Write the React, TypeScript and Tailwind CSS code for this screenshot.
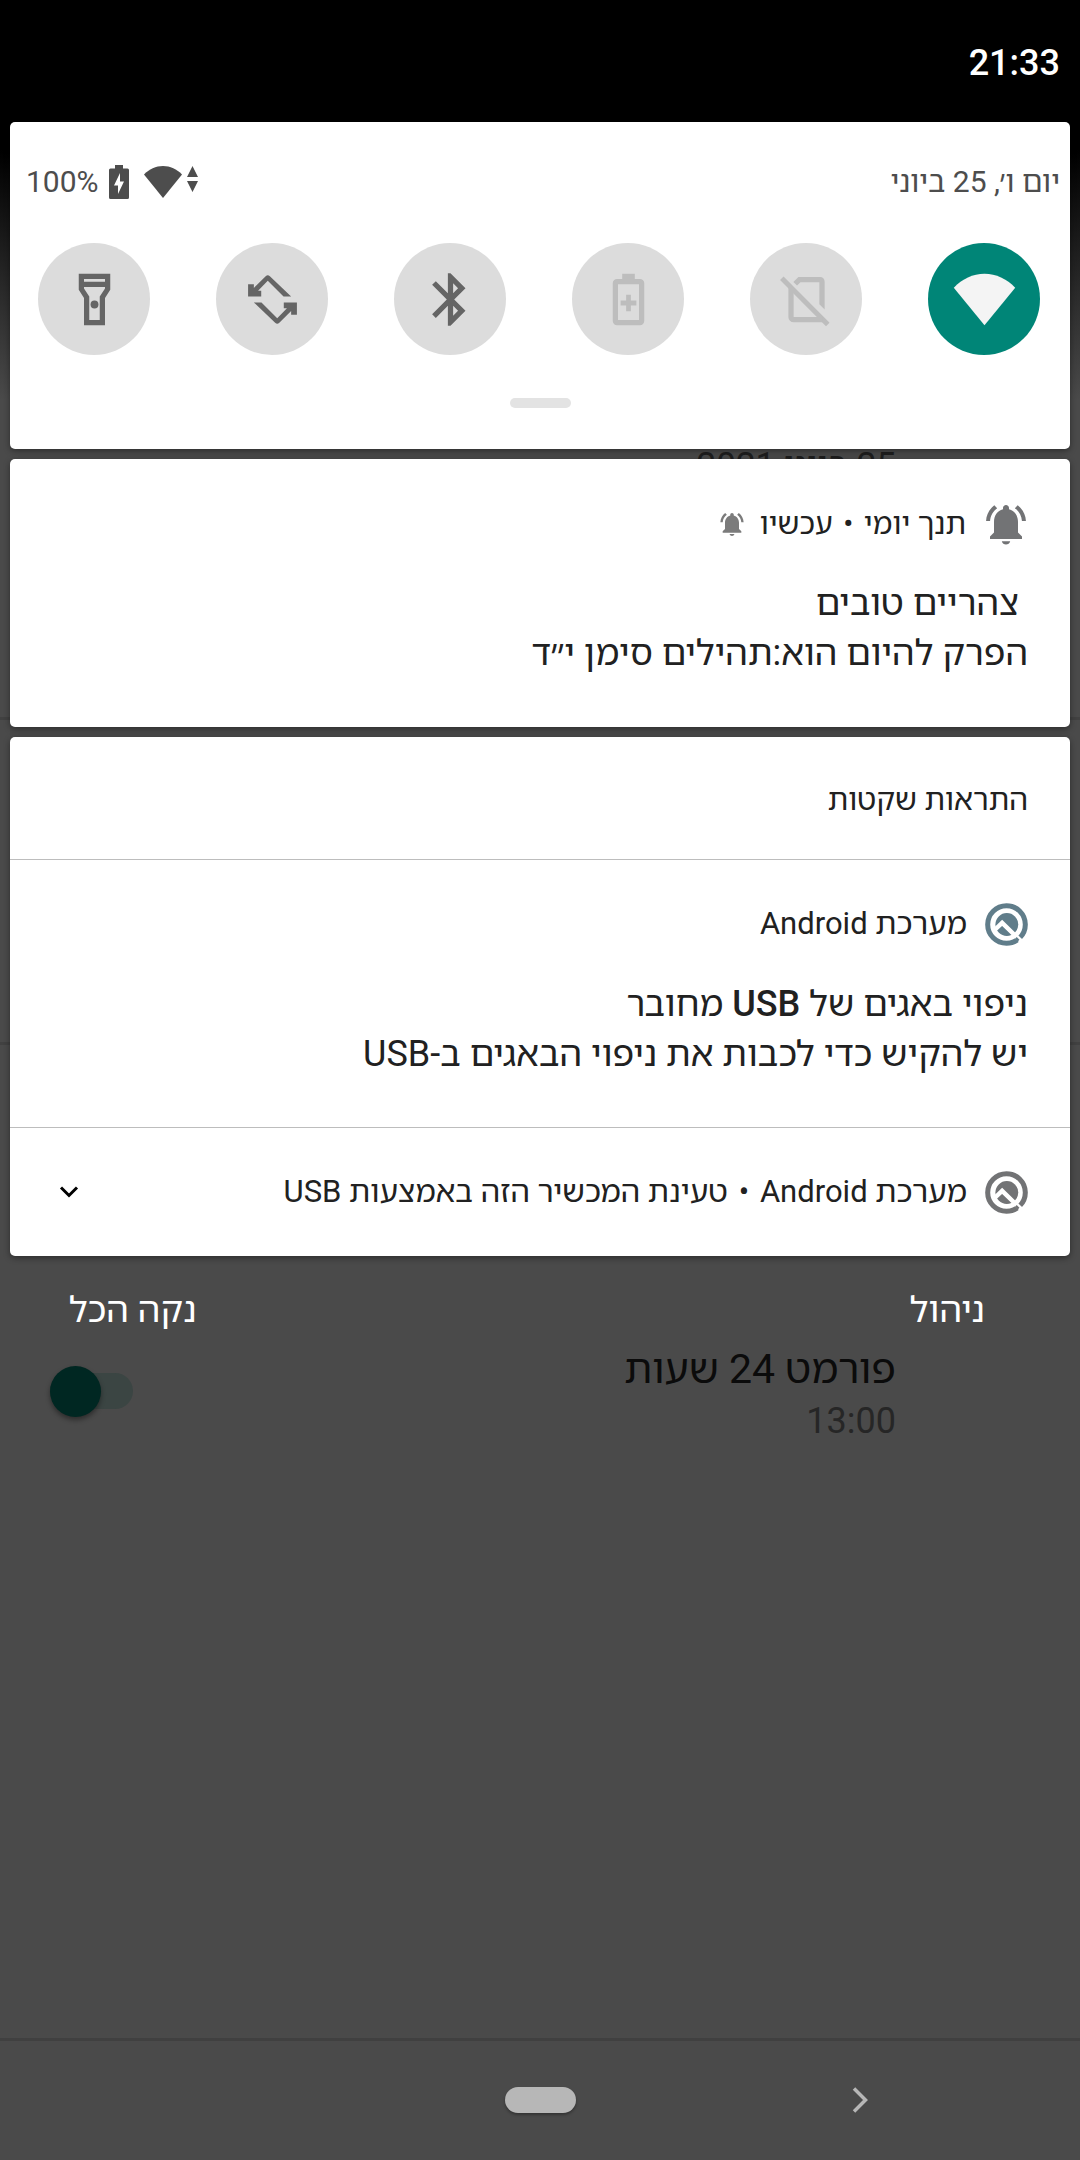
import type { ReactNode } from "react";

function Svg({ className, children }: { className: string; children: ReactNode }) {
  return (
    <svg viewBox="0 0 24 24" className={className} fill="currentColor" aria-hidden="true">
      {children}
    </svg>
  );
}

const WIFI_FAN = "M12 21.8L.3 7.5C3.5 4.2 7.6 2.2 12 2.2S20.5 4.2 23.7 7.5Z";

function Bell({ className }: { className: string }) {
  return (
    <Svg className={className}>
      <path d="M7.58 4.08L6.15 2.65C3.75 4.48 2.17 7.3 2.03 10.5h2c.15-2.65 1.51-4.97 3.55-6.42zM19.97 10.5h2c-.15-3.2-1.73-6.02-4.12-7.85l-1.42 1.43c2.02 1.45 3.39 3.77 3.54 6.42zM18 11c0-3.07-1.64-5.64-4.5-6.32V4c0-.83-.67-1.5-1.5-1.5s-1.5.67-1.5 1.5v.68C7.63 5.36 6 7.92 6 11v5.200l-2 2v1.300h16v-1.300l-2-2V11zM9.900 20.600c.3 1.100 1.100 1.600 2.100 1.600s1.800-.5 2.100-1.600z" />
    </Svg>
  );
}

/* Android Q mark: ring, inner disc and a caret whose long leg cuts the ring */
function SystemIcon({ className }: { className: string }) {
  return (
    <svg viewBox="0 0 128 128" className={className} fill="none" aria-hidden="true">
      <circle cx="64" cy="64" r="56" stroke="currentColor" strokeWidth="15" />
      <circle cx="65" cy="64" r="34" fill="currentColor" />
      <path d="M27 82L51 59L112 118" stroke="#fff" strokeWidth="13" strokeLinejoin="miter" />
      <path d="M92 104L100 112" stroke="currentColor" strokeWidth="7" />
    </svg>
  );
}

type Tile = { name: string; state: "on" | "off" | "unavailable"; icon: ReactNode };

const tiles: Tile[] = [
  { name: "Wi-Fi", state: "on", icon: <path d={WIFI_FAN} /> },
  {
    name: "SIM",
    state: "unavailable",
    icon: (
      <>
        <path d="M2.6 3.900L20.100 21.500" stroke="currentColor" strokeWidth="1.900" />
        <path d="M6.100 7.600V18.700a1 1 0 0 0 1 1H18" fill="none" stroke="currentColor" strokeWidth="2" />
        <path d="M8.400 6.700L7 5.300 8.900 3.400H17.200a1.700 1.700 0 0 1 1.700 1.700V15.800L16.900 13.800V5.400H9.700Z" />
      </>
    ),
  },
  {
    name: "Battery Saver",
    state: "unavailable",
    icon: (
      <>
        <path d="M9.600 2.200H14.400V5H9.600Z" />
        <rect x="7" y="5.200" width="10" height="15.600" rx=".6" fill="none" stroke="currentColor" strokeWidth="2" />
        <path d="M11.100 10.200h1.800v2.200H15v1.900h-2.100v2.200h-1.800v-2.200H9v-1.900h2.100z" />
      </>
    ),
  },
  {
    name: "Bluetooth",
    state: "off",
    icon: (
      <path d="M17.710 7.710L12 2h-1v7.590L6.410 5 5 6.410 10.590 12 5 17.590 6.410 19 11 14.410V22h1l5.710-5.710-4.300-4.290 4.300-4.290zM13 5.830l1.880 1.880L13 9.590V5.830zm1.880 10.460L13 18.170v-3.760l1.880 1.880z" />
    ),
  },
  {
    name: "Auto-rotate",
    state: "off",
    icon: (
      <>
        <path d="M2.700 6.200H4.900V7.600L9.400 3.100Q10.200 2.400 11 3.100L19.100 10.900H16.200L10.200 4.900 6.500 8.700H7.700V10.900H2.700Z" />
        <path
          d="M2.700 6.200H4.900V7.600L9.400 3.100Q10.200 2.400 11 3.100L19.100 10.900H16.200L10.200 4.900 6.500 8.700H7.700V10.900H2.700Z"
          transform="rotate(180 12 12)"
        />
      </>
    ),
  },
  {
    name: "Flashlight",
    state: "off",
    icon: (
      <>
        <path
          fillRule="evenodd"
          d="M6 2.200H18V8.300L16 11.400V21.800H8V11.400L6 8.300ZM8 4.200V5.200H16V4.200ZM8 7.200V7.800L10 10.900V19.800H14V10.900L16 7.800V7.200Z"
        />
        <circle cx="12" cy="13.900" r="1.500" />
      </>
    ),
  },
];

const tileStyle = {
  on: "bg-[#008577] text-[#f4f4f4]",
  off: "bg-[#dcdcdc] text-[#656565]",
  unavailable: "bg-[#dcdcdc] text-[#bdbdbd]",
};

function Card({ children }: { children: ReactNode }) {
  return (
    <section className="rounded-[5px] bg-white text-[#212121] shadow-[0_2px_6px_rgba(0,0,0,0.4)]">{children}</section>
  );
}

function NotificationHeader({ icon, children }: { icon: ReactNode; children: ReactNode }) {
  return (
    <div className="flex h-12 items-center gap-[18px] text-[31px] leading-[48px]">
      {icon}
      {children}
    </div>
  );
}

function Dot() {
  return <span className="mx-[3px]">•</span>;
}

/* The dimmed settings screen that lies under the shade */
function SettingsBackdrop() {
  return (
    <div className="absolute inset-0 flex flex-col bg-[#4a4a4a] bg-[linear-gradient(to_bottom,#000_150px,#4a4a4a_400px)]">
      <div className="flex h-[720px] flex-col border-b-[3px] border-[#414141] ps-[184px] pt-[441px] text-[35px] leading-[50px] text-[#1e1e1e]">
        <p>25 ביוני 2021</p>
      </div>
      <div className="h-[325px] border-b-[3px] border-[#414141]" />
      <label className="mt-[298px] flex items-center justify-between ps-[184px] pe-[50px]">
        <span className="flex flex-col">
          <span className="text-[41px] leading-[52px] text-[#0b0b0b]">פורמט 24 שעות</span>
          <span className="text-[36px] leading-[52px] text-[#262626]">13:00</span>
        </span>
        <span className="relative mb-2 flex h-[51px] w-[83px] items-center">
          <input
            type="checkbox"
            role="switch"
            defaultChecked
            className="h-9 w-full appearance-none rounded-full bg-[#3b4543]"
          />
          <span className="absolute left-0 top-0 size-[51px] rounded-full bg-[#002722] shadow-[0_3px_5px_rgba(0,0,0,0.4)]" />
        </span>
      </label>
      <nav className="mt-auto grid h-[122px] grid-cols-[1fr_auto_1fr] items-center border-t-[3px] border-[#404040] pb-[2px]">
        <button type="button" aria-label="חזרה" className="ms-[208px] justify-self-start text-[#b7b7b7]">
          <svg viewBox="0 0 24 32" className="h-8 w-6" fill="none" aria-hidden="true">
            <path d="M6 4.500L17.500 16L6 27.500" stroke="currentColor" strokeWidth="3.500" />
          </svg>
        </button>
        <button
          type="button"
          aria-label="דף הבית"
          className="h-[26px] w-[71px] rounded-full bg-[#b7b7b7] shadow-[0_2px_3px_rgba(0,0,0,0.3)]"
        />
      </nav>
    </div>
  );
}

export default function App() {
  return (
    <div
      dir="rtl"
      lang="he"
      className="relative min-h-screen overflow-hidden bg-black font-['Roboto','Noto_Sans_Hebrew','Open_Sans',sans-serif]"
    >
      <SettingsBackdrop />

      <div className="relative flex flex-col px-[10px]">
        <header className="pt-[38px] pb-[34px] ps-[10px] text-[36px] font-medium leading-[50px] text-white">
          <time>21:33</time>
        </header>

        <main className="flex flex-col gap-[10px]">
          <Card>
            <div className="flex items-center justify-between pt-[35px] ps-[10px] pe-4 text-[30px] leading-[50px] text-[#4d4d4d]">
              <span>יום ו׳, 25 ביוני</span>
              <span dir="ltr" className="flex items-center">
                100%
                <svg viewBox="0 0 20 34" className="ms-[10px] h-[34px] w-5" fill="currentColor" aria-hidden="true">
                  <path
                    fillRule="evenodd"
                    d="M6 0H14V3.500H18.500Q20 3.500 20 5V32.500Q20 34 18.500 34H1.500Q0 34 0 32.500V5Q0 3.500 1.500 3.500H6ZM11 8L5 20.500H9V29L15 16.500H11Z"
                  />
                </svg>
                <svg viewBox="0 0 38 32" className="ms-[15px] h-8 w-[38px]" fill="currentColor" aria-hidden="true">
                  <path d="M19 32L0 8.500C5 3.200 12 0 19 0S33 3.200 38 8.500Z" />
                </svg>
                <svg viewBox="0 0 11 32" className="ms-[5px] h-8 w-[11px]" fill="currentColor" aria-hidden="true">
                  <path d="M5.500 0L11 11H0ZM5.500 26L0 15H11Z" />
                </svg>
              </span>
            </div>
            <div className="mt-9 flex justify-between ps-[30px] pe-7">
              {tiles.map((tile) => (
                <button
                  key={tile.name}
                  type="button"
                  aria-label={tile.name}
                  disabled={tile.state === "unavailable"}
                  className={`flex size-28 items-center justify-center rounded-full ${tileStyle[tile.state]}`}
                >
                  <Svg className="size-[63px]">{tile.icon}</Svg>
                </button>
              ))}
            </div>
            <div className="flex justify-center pt-[43px] pb-[41px]">
              <span className="h-[10px] w-[61px] rounded-full bg-[#e3e3e3]" />
            </div>
          </Card>

          <Card>
            <article className="px-[42px] pt-[41px] pb-[49px]">
              <NotificationHeader icon={<Bell className="-mx-[2px] size-12 text-[#727375]" />}>
                <span className="text-[30px]">
                  תנך יומי <Dot /> עכשיו
                </span>
                <Bell className="-ms-1 size-7 text-[#7b7b7b]" />
              </NotificationHeader>
              <h2 className="mt-[30px] text-[36px] leading-[50px]">&nbsp;צהריים טובים</h2>
              <p className="text-[36px] leading-[50px]">הפרק להיום הוא:תהילים סימן י״ד</p>
            </article>
          </Card>

          <Card>
            <h2 className="border-b border-[#bdbdbd] px-[42px] pt-[39px] pb-[35px] text-[30px] leading-[48px]">
              התראות שקטות
            </h2>
            <article className="border-b border-[#bdbdbd] px-[42px] pt-10 pb-12">
              <NotificationHeader icon={<SystemIcon className="size-[43px] text-[#607d8a]" />}>
                <span>מערכת Android</span>
              </NotificationHeader>
              <h2 className="mt-[31px] text-[36px] leading-[50px]">
                ניפוי באגים של <span className="font-medium">USB</span> מחובר
              </h2>
              <p className="text-[36px] leading-[50px]">יש להקיש כדי לכבות את ניפוי הבאגים ב-USB</p>
            </article>
            <article className="flex items-center justify-between ps-[42px] pe-[43px] py-10">
              <NotificationHeader icon={<SystemIcon className="size-[43px] text-[#727375]" />}>
                <span>
                  מערכת Android <Dot /> טעינת המכשיר הזה באמצעות USB
                </span>
              </NotificationHeader>
              <button type="button" aria-label="הרחבה" className="text-black">
                <svg viewBox="0 0 32 32" className="size-8" fill="none" aria-hidden="true">
                  <path d="M8 11.500L16 19.500L24 11.500" stroke="currentColor" strokeWidth="3" />
                </svg>
              </button>
            </article>
          </Card>
        </main>

        <footer className="flex justify-between pt-[29px] ps-[85px] pe-[59px] text-[36px] leading-[50px] text-white">
          <button type="button">ניהול</button>
          <button type="button">נקה הכל</button>
        </footer>
      </div>
    </div>
  );
}
